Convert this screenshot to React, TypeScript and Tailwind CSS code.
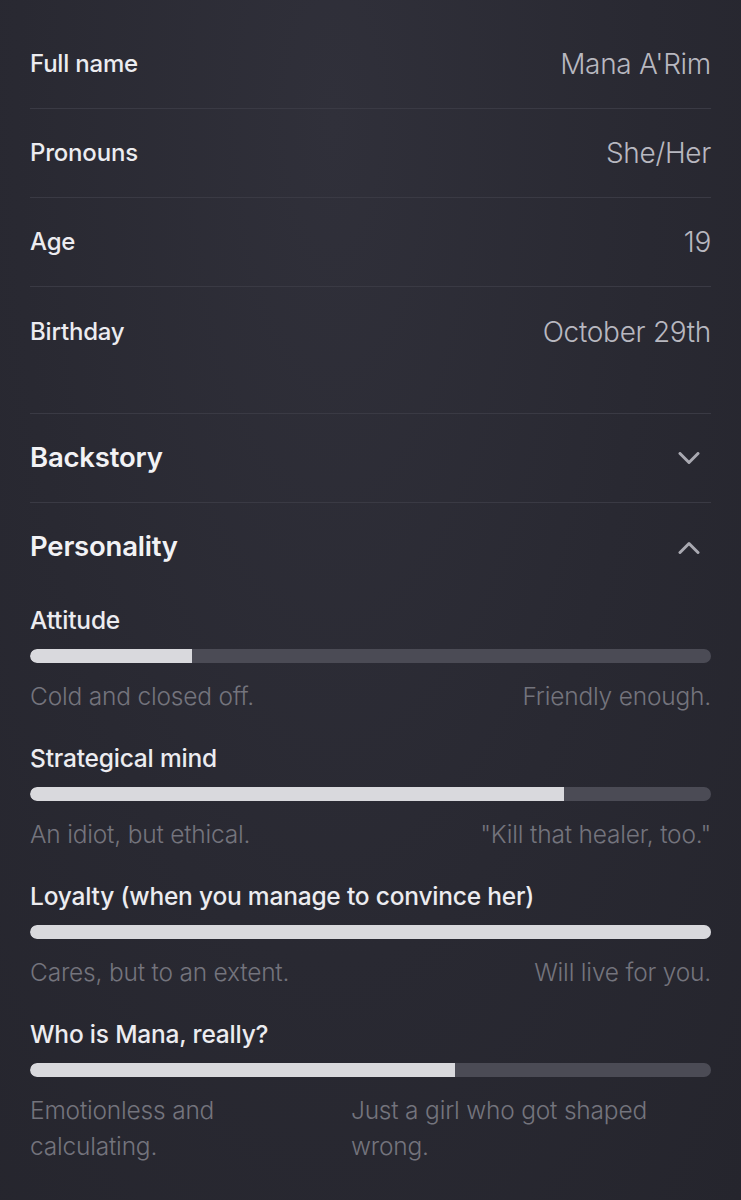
import React from "react";

const info = [
  { label: "Full name", value: "Mana A'Rim" },
  { label: "Pronouns", value: "She/Her" },
  { label: "Age", value: "19" },
  { label: "Birthday", value: "October 29th" },
];

const traits = [
  { label: "Attitude", value: 23.8, left: "Cold and closed off.", right: "Friendly enough." },
  { label: "Strategical mind", value: 78.4, left: "An idiot, but ethical.", right: "\"Kill that healer, too.\"" },
  { label: "Loyalty (when you manage to convince her)", value: 100, left: "Cares, but to an extent.", right: "Will live for you." },
  { label: "Who is Mana, really?", value: 62.4, left: "Emotionless and calculating.", right: "Just a girl who got shaped wrong." },
];

const Chevron = ({ up = false }: { up?: boolean }) => (
  <svg width="22" height="13" viewBox="0 0 22 13" fill="none" className="mr-[11px]">
    <path
      d={up ? "M2 11.5 L11 2.5 L20 11.5" : "M2 1.5 L11 10.5 L20 1.5"}
      stroke="#a9a9b1"
      strokeWidth="3"
      strokeLinecap="round"
      strokeLinejoin="round"
    />
  </svg>
);

const App = () => {
  return (
    <div className="min-h-[1200px] w-full bg-[#292932] bg-[radial-gradient(ellipse_at_45%_10%,#30303a_0%,#292932_55%,#25252d_100%)] px-[30px] pt-5 font-['Inter',sans-serif]">
      {/* basic info */}
      <div className="border-b border-[#3a3a44] pb-[37px]">
        {info.map((row, i) => (
          <div
            key={row.label}
            className={`flex h-[89px] items-center justify-between ${i < info.length - 1 ? "border-b border-[#3a3a44]" : "h-[88px]"}`}
          >
            <span className="text-[24px] font-medium tracking-[-0.2px] text-[#ececf0]">{row.label}</span>
            <span className="text-[28px] font-light tracking-[-0.3px] text-[#b8b8c0]">{row.value}</span>
          </div>
        ))}
      </div>

      {/* accordions */}
      <div className="flex h-[89px] items-center justify-between border-b border-[#3a3a44]">
        <span className="text-[27.5px] font-semibold tracking-[-0.2px] text-[#f2f2f5]">Backstory</span>
        <Chevron />
      </div>
      <div className="flex h-[88px] items-center justify-between">
        <span className="text-[27.5px] font-semibold tracking-[-0.2px] text-[#f2f2f5]">Personality</span>
        <Chevron up />
      </div>

      <div className="flex flex-col gap-[30px] pt-[15px]">
        {traits.map((t) => (
          <div key={t.label}>
            <div className="text-[24.5px] leading-[28px] font-medium tracking-[-0.2px] text-[#ececf0]">{t.label}</div>
            <div className="mt-[15px] h-[14px] w-full overflow-hidden rounded-full bg-[#4b4b55]">
              <div className="h-full rounded-l-full bg-[#d9d9dd]" style={{ width: `${t.value}%` }} />
            </div>
            <div className="mt-[15px] flex justify-between gap-[20px] text-[24.5px] leading-[36px] font-light tracking-[-0.2px] text-[#74747d]">
              <span>{t.left}</span>
              <span>{t.right}</span>
            </div>
          </div>
        ))}
      </div>
    </div>
  );
};

export default App;
